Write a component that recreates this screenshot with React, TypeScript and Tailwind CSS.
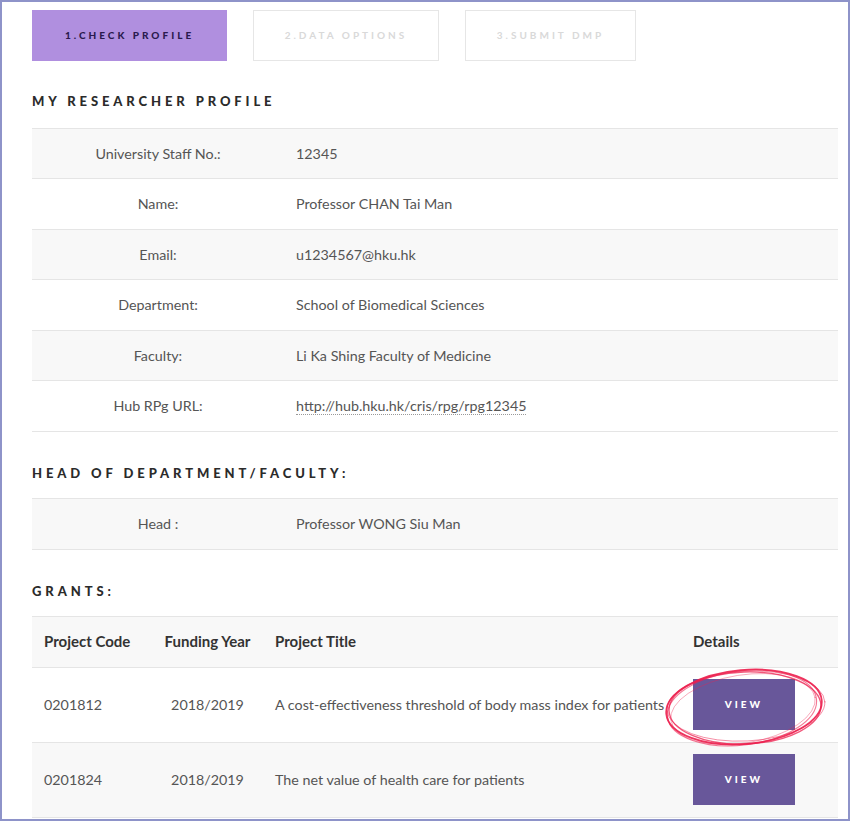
import React from "react";

const profile = [
  { label: "University Staff No.:", value: "12345" },
  { label: "Name:", value: "Professor CHAN Tai Man" },
  { label: "Email:", value: "u1234567@hku.hk" },
  { label: "Department:", value: "School of Biomedical Sciences" },
  { label: "Faculty:", value: "Li Ka Shing Faculty of Medicine" },
  { label: "Hub RPg URL:", value: "http://hub.hku.hk/cris/rpg/rpg12345", link: true },
];

const grants = [
  { code: "0201812", year: "2018/2019", title: "A cost-effectiveness threshold of body mass index for patients", circled: true },
  { code: "0201824", year: "2018/2019", title: "The net value of health care for patients" },
];

function Heading({ children }: { children: React.ReactNode }) {
  return (
    <h3 className="font-['Lato',sans-serif] font-black text-[13px] text-[#2b2b2b] uppercase tracking-[0.3em]">
      {children}
    </h3>
  );
}

function Scribble() {
  // hand drawn ring around the first VIEW button
  return (
    <svg className="absolute left-[-31px] top-[-14px] pointer-events-none" width="166" height="84" viewBox="0 0 166 84">
      <g fill="none" stroke="#ec1f4e" strokeLinecap="round">
        <ellipse cx="82" cy="42" rx="78" ry="37" strokeWidth="1.8" transform="rotate(-5 82 42)" opacity="0.9" />
        <ellipse cx="83" cy="43" rx="76" ry="36" strokeWidth="1.3" transform="rotate(-2 83 43)" opacity="0.75" />
        <ellipse cx="80" cy="43" rx="75" ry="37" strokeWidth="1.1" transform="rotate(-7 80 43)" opacity="0.6" />
        <ellipse cx="84" cy="41" rx="79" ry="35" strokeWidth="0.9" transform="rotate(-3 84 41)" opacity="0.55" />
        <ellipse cx="81" cy="44" rx="73" ry="34" strokeWidth="0.8" transform="rotate(-9 81 44)" opacity="0.45" />
      </g>
    </svg>
  );
}

export default function App() {
  return (
    <div className="w-[850px] h-[821px] border-2 border-[#8e93c9] bg-white overflow-hidden font-['Lato',sans-serif] text-[#555]">
      <div className="pl-[30px] pr-[10px] pt-[8px]">
        <div className="flex gap-[26px]">
          <div className="w-[195px] h-[51px] bg-[#b08fdf] flex items-center justify-center text-[10px] font-black tracking-[0.3em] text-[#2a1a4e]">
            1.CHECK PROFILE
          </div>
          <div className="w-[186px] h-[51px] border border-[#e6e6e6] flex items-center justify-center text-[10px] font-bold tracking-[0.3em] text-[#d9d9d9]">
            2.DATA OPTIONS
          </div>
          <div className="w-[171px] h-[51px] border border-[#e6e6e6] flex items-center justify-center text-[10px] font-bold tracking-[0.3em] text-[#d9d9d9]">
            3.SUBMIT DMP
          </div>
        </div>

        <div className="mt-[31px] mb-[16px]">
          <Heading>My Researcher Profile</Heading>
        </div>
        <div className="border-t border-[#e5e5e5]">
          {profile.map((r, i) => (
            <div
              key={r.label}
              className={`flex items-center h-[50.5px] border-b border-[#e5e5e5] text-[14.3px] ${i % 2 === 0 ? "bg-[#f8f8f8]" : "bg-white"}`}
            >
              <div className="w-[252px] text-center">{r.label}</div>
              <div className="pl-[12px]">
                {r.link ? (
                  <span className="border-b border-dotted border-[#999]">{r.value}</span>
                ) : (
                  r.value
                )}
              </div>
            </div>
          ))}
        </div>

        <div className="mt-[32px] mb-[15px]">
          <Heading>Head of Department/Faculty:</Heading>
        </div>
        <div className="border-t border-[#e5e5e5]">
          <div className="flex items-center h-[51px] border-b border-[#e5e5e5] bg-[#f8f8f8] text-[14.3px]">
            <div className="w-[252px] text-center">Head :</div>
            <div className="pl-[12px]">Professor WONG Siu Man</div>
          </div>
        </div>

        <div className="mt-[32px] mb-[14px]">
          <Heading>Grants:</Heading>
        </div>
        <table className="w-full border-t border-[#e5e5e5] text-[14.3px] border-collapse">
          <thead>
            <tr className="bg-[#f8f8f8] h-[51px] border-b border-[#e5e5e5] text-[#333] text-[15px]">
              <th className="w-[120px] pl-[12px] text-left font-bold">Project Code</th>
              <th className="w-[111px] text-center font-bold">Funding Year</th>
              <th className="pl-[12px] text-left font-bold">Project Title</th>
              <th className="w-[145px] text-left font-bold">Details</th>
            </tr>
          </thead>
          <tbody>
            {grants.map((g, i) => (
              <tr key={g.code} className={`h-[75px] border-b border-[#e5e5e5] ${i % 2 === 1 ? "bg-[#f8f8f8]" : "bg-white"}`}>
                <td className="pl-[12px]">{g.code}</td>
                <td className="text-center">{g.year}</td>
                <td className="pl-[12px] whitespace-nowrap">{g.title}</td>
                <td>
                  <div className="relative w-[102px] h-[51px]">
                    <div className="w-[102px] h-[51px] bg-[#68579a] flex items-center justify-center text-white text-[10px] font-black tracking-[0.3em]">
                      VIEW
                    </div>
                    {g.circled && <Scribble />}
                  </div>
                </td>
              </tr>
            ))}
          </tbody>
        </table>
      </div>
    </div>
  );
}
